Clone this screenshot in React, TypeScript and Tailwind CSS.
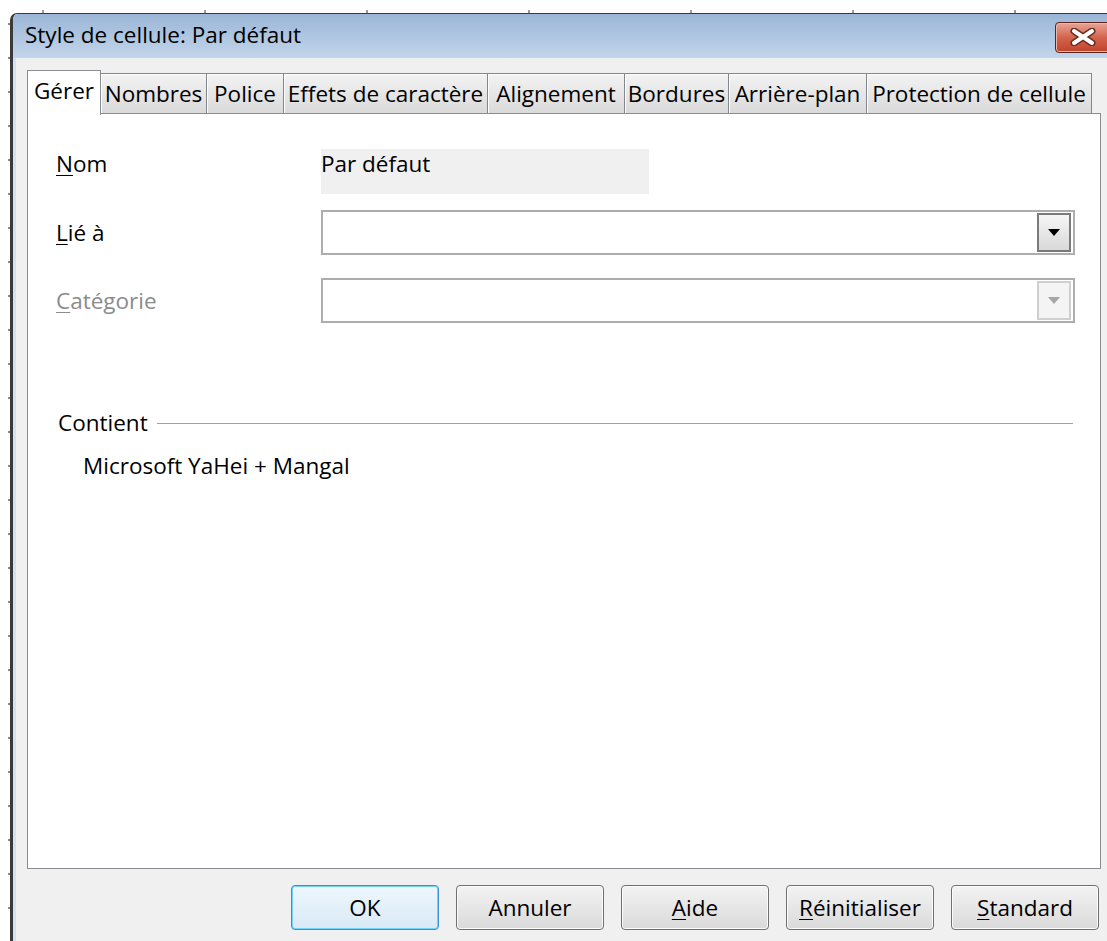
import type { ReactNode } from 'react';

const tabs = [
  { name: 'Gérer', w: 'w-[74px]', active: true },
  { name: 'Nombres', w: 'w-[106px]' },
  { name: 'Police', w: 'w-[77px]' },
  { name: 'Effets de caractère', w: 'w-[204px]' },
  { name: 'Alignement', w: 'w-[137px]' },
  { name: 'Bordures', w: 'w-[104px]' },
  { name: 'Arrière-plan', w: 'w-[138px]' },
  { name: 'Protection de cellule', w: 'w-[225px]' },
];

// label with an underlined access key, first letter only
const Mnemonic = ({ text }: { text: string }) => (
  <>
    <span className="underline underline-offset-[3px] decoration-1">{text[0]}</span>
    {text.slice(1)}
  </>
);

const Combo = ({ disabled }: { disabled?: boolean }) => (
  <div className="flex h-[45px] flex-1 items-center justify-end border-2 border-[#adadad] bg-white pr-[2px]">
    <div
      className={
        disabled
          ? 'flex h-[39px] w-[34px] items-center justify-center border-2 border-[#cfcfcf] bg-[#f4f4f4]'
          : 'flex h-[39px] w-[34px] items-center justify-center border-2 border-[#7a7a7a] bg-gradient-to-b from-[#f6f6f6] to-[#d9d9d9]'
      }
    >
      <svg width="12" height="7" viewBox="0 0 12 7">
        <path d="M0 0 H12 L6 7 Z" fill={disabled ? '#a6a6a6' : '#000'} />
      </svg>
    </div>
  </div>
);

const Button = ({ children, focused }: { children: ReactNode; focused?: boolean }) => (
  <button
    className={
      focused
        ? 'flex h-[45px] w-[148px] items-center justify-center rounded-[4px] border border-[#3c8fd0] bg-gradient-to-b from-[#eef7fd] to-[#d8e9f5] shadow-[inset_0_0_0_1px_#76d1f7] text-black'
        : 'flex h-[45px] w-[148px] items-center justify-center rounded-[4px] border border-[#707070] bg-gradient-to-b from-[#f3f3f3] to-[#dadada] shadow-[inset_0_0_0_1px_#fbfbfb] text-black'
    }
  >
    {children}
  </button>
);

export default function App() {
  return (
    <div className="h-[941px] w-full overflow-hidden bg-white font-['Open_Sans','Noto_Sans',sans-serif] text-[22.5px] leading-[30px] text-black">
      {/* sheet grid ticks behind the dialog */}
      <div className="h-[13px] bg-[repeating-linear-gradient(to_right,transparent_0,transparent_42px,#9a9a9a_42px,#9a9a9a_44px,transparent_44px,transparent_162px)] bg-[length:100%_3px] bg-[position:0_10px] bg-no-repeat" />
      <div className="flex">
        <div className="h-[928px] w-[10px] shrink-0 bg-[repeating-linear-gradient(to_bottom,transparent_0,transparent_10px,#8a8a8a_10px,#8a8a8a_12px,transparent_12px,transparent_34px)] bg-[length:2px_100%] bg-[position:8px_0] bg-no-repeat" />

        <div className="w-[1103px] shrink-0 overflow-hidden rounded-tl-[7px] border-l-[3px] border-t border-[#3a3a3a]">
          {/* title bar */}
          <div className="flex h-[44px] items-center justify-between bg-gradient-to-b from-[#9bb6d6] to-[#c2d5eb] pl-[12px]">
            <span className="pb-[2px]">Style de cellule: Par défaut</span>
            <div className="mr-[2px] mt-[2px] flex h-[31px] w-[56px] items-center justify-center rounded-[4px] border border-[#5e2419] bg-gradient-to-b from-[#e6a597] via-[#d4634c] to-[#c2432c] shadow-[inset_0_0_0_1px_#f0b6aa]">
              <svg width="28" height="18" viewBox="0 0 28 18">
                <path d="M5 3 L23 15 M23 3 L5 15" stroke="#6b2d22" strokeWidth="7" strokeLinecap="round" />
                <path d="M5 3 L23 15 M23 3 L5 15" stroke="#fff" strokeWidth="4" strokeLinecap="round" />
              </svg>
            </div>
          </div>

          <div className="flex">
            <div className="w-[3px] shrink-0 bg-[#d3e2f2]" />
            <div className="h-[900px] flex-1 bg-[#f0f0f0] pl-[11px] pt-[12px]">
              {/* tab strip */}
              <div className="relative z-10 flex items-end">
                {tabs.map((t) =>
                  t.active ? (
                    <div
                      key={t.name}
                      className={`${t.w} mb-[-2px] flex h-[45px] items-center justify-center border-x border-t border-[#898c95] bg-white pb-[5px]`}
                    >
                      {t.name}
                    </div>
                  ) : (
                    <div
                      key={t.name}
                      className={`${t.w} flex h-[40px] items-center justify-center border-r border-t border-[#83868c] bg-gradient-to-b from-[#f3f3f3] to-[#dadada] shadow-[inset_1px_1px_0_#fdfdfd] whitespace-nowrap`}
                    >
                      {t.name}
                    </div>
                  ),
                )}
              </div>

              {/* tab page */}
              <div className="h-[756px] w-[1074px] border border-[#898c95] bg-white pl-[28px] pr-[25px] pt-[35px]">
                <div className="flex h-[45px] items-start">
                  <div className="w-[265px] shrink-0">
                    <Mnemonic text="Nom" />
                  </div>
                  <div className="h-[45px] w-[328px] bg-[#f0f0f0]">Par défaut</div>
                </div>

                <div className="mt-[16px] flex items-center">
                  <div className="w-[265px] shrink-0">
                    <Mnemonic text="Lié à" />
                  </div>
                  <Combo />
                </div>

                <div className="mt-[23px] flex items-center">
                  <div className="w-[265px] shrink-0 text-[#8b8b8b]">
                    <Mnemonic text="Catégorie" />
                  </div>
                  <Combo disabled />
                </div>

                <div className="mt-[85px] flex h-[30px] items-center pl-[2px] pr-[2px]">
                  <span>Contient</span>
                  <div className="ml-[9px] h-px flex-1 bg-[#a0a0a0]" />
                </div>
                <div className="mt-[13px] pl-[27px]">Microsoft YaHei + Mangal</div>
              </div>

              {/* dialog buttons */}
              <div className="mt-[16px] flex w-[1074px] justify-end gap-[17px] pr-[2px]">
                <Button focused>OK</Button>
                <Button>Annuler</Button>
                <Button>
                  <Mnemonic text="Aide" />
                </Button>
                <Button>
                  <Mnemonic text="Réinitialiser" />
                </Button>
                <Button>
                  <Mnemonic text="Standard" />
                </Button>
              </div>
            </div>
          </div>
        </div>
      </div>
    </div>
  );
}
